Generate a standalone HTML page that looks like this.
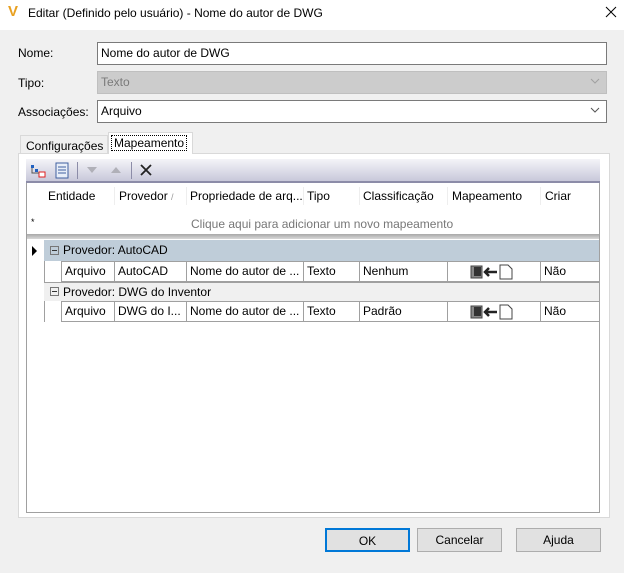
<!DOCTYPE html><html><head><style>
*{box-sizing:border-box;margin:0;padding:0}
body{width:624px;height:573px;background:#f0f0f0;font-family:"Liberation Sans",sans-serif;font-size:12px;color:#000;position:relative;overflow:hidden}
.a{position:absolute}
.inp{position:absolute;left:97px;width:510px;height:23px;border:1px solid #7a7a7a;background:#fff;padding:3px 3px;line-height:15px}
.lbl{position:absolute;left:18px}
.chev{position:absolute;right:6px;top:4px}
.c{position:absolute;white-space:nowrap;overflow:hidden;padding-left:3px;line-height:19px;border-right:1px solid #a0a0a0;height:100%;top:0}
.btn{position:absolute;top:528px;width:85px;height:24px;border:1px solid #adadad;background:#e1e1e1;text-align:center;line-height:22px}
</style></head><body>
<div class="a" style="left:0;top:0;width:624px;height:30px;background:#fff"></div>
<div class="a" style="left:8px;top:4px;width:13px;height:15px;font-weight:bold;color:#e8a020;font-size:15px;line-height:15px">V</div>
<div class="a" style="left:28px;top:6px;font-size:12px">Editar (Definido pelo usuário) - Nome do autor de DWG</div>
<svg class="a" style="left:605px;top:6px" width="12" height="12"><path d="M1 1L11 11M11 1L1 11" stroke="#000" stroke-width="1"/></svg>

<div class="lbl" style="top:46px">Nome:</div>
<div class="inp" style="top:42px">Nome do autor de DWG</div>
<div class="lbl" style="top:76px">Tipo:</div>
<div class="inp" style="top:71px;background:#cccccc;border-color:#bfbfbf;color:#7a7a7a">Texto<svg class="chev" width="10" height="10"><path d="M1 3L5 7L9 3" stroke="#a0a0a0" fill="none"/></svg></div>
<div class="lbl" style="top:105px">Associações:</div>
<div class="inp" style="top:100px">Arquivo<svg class="chev" width="10" height="10"><path d="M1 3L5 7L9 3" stroke="#555" fill="none"/></svg></div>

<div class="a" style="left:20px;top:135px;width:88px;height:19px;border:1px solid #d9d9d9;border-bottom:none;background:#f0f0f0;padding:3px 5px">Configurações</div>
<div class="a" style="left:18px;top:153px;width:592px;height:365px;border:1px solid #d9d9d9;background:#fff"></div>
<div class="a" style="left:108px;top:132px;width:85px;height:22px;border:1px solid #d9d9d9;border-bottom:none;background:#fff;padding:3px 2px"><span style="border:1px dotted #000;padding:0 2px">Mapeamento</span></div>

<div class="a" style="left:26px;top:159px;width:574px;height:24px;background:linear-gradient(#f4f4f8,#c8c8da);border-bottom:2px solid #8c8ca8"></div>
<svg class="a" style="left:30px;top:163px" width="16" height="16"><rect x="1" y="2" width="3" height="3" fill="#2060c0"/><rect x="5" y="6" width="3" height="3" fill="#2060c0"/><rect x="9" y="9" width="6" height="5" fill="#fff" stroke="#e02020"/><path d="M2 5V10H9" stroke="#555" fill="none"/></svg>
<svg class="a" style="left:55px;top:162px" width="14" height="17"><rect x="1" y="1" width="12" height="15" fill="#e8eef8" stroke="#4060a0"/><path d="M3 5H11M3 8H11M3 11H11" stroke="#4060a0"/></svg>
<div class="a" style="left:77px;top:162px;width:1px;height:17px;background:#8c8ca8"></div>
<svg class="a" style="left:85px;top:165px" width="14" height="10"><path d="M2 2H12L7 8Z" fill="#b0b0b8"/></svg>
<svg class="a" style="left:109px;top:165px" width="14" height="10"><path d="M2 8H12L7 2Z" fill="#b0b0b8"/></svg>
<div class="a" style="left:131px;top:162px;width:1px;height:17px;background:#8c8ca8"></div>
<svg class="a" style="left:139px;top:163px" width="14" height="14"><path d="M2 2L12 12M12 2L2 12" stroke="#222" stroke-width="1.8"/></svg>

<div class="a" style="left:26px;top:183px;width:574px;height:330px;border:1px solid #a0a0a0;border-top:none;background:#fff;overflow:hidden">
 <div class="a" style="left:0;top:0;width:574px;height:26px">
  <div class="a" style="left:21px;top:6px">Entidade</div>
  <div class="a" style="left:92px;top:6px">Provedor <span style="color:#999;font-size:9px">/</span></div>
  <div class="a" style="left:163px;top:6px">Propriedade de arq...</div>
  <div class="a" style="left:280px;top:6px">Tipo</div>
  <div class="a" style="left:336px;top:6px">Classificação</div>
  <div class="a" style="left:425px;top:6px">Mapeamento</div>
  <div class="a" style="left:518px;top:6px">Criar</div>
  <div class="a" style="left:87px;top:4px;width:1px;height:18px;background:#eee"></div>
  <div class="a" style="left:159px;top:4px;width:1px;height:18px;background:#eee"></div>
  <div class="a" style="left:276px;top:4px;width:1px;height:18px;background:#eee"></div>
  <div class="a" style="left:332px;top:4px;width:1px;height:18px;background:#eee"></div>
  <div class="a" style="left:420px;top:4px;width:1px;height:18px;background:#eee"></div>
  <div class="a" style="left:513px;top:4px;width:1px;height:18px;background:#eee"></div>
 </div>
 <div class="a" style="left:4px;top:34px;font-size:9px">*</div>
 <div class="a" style="left:164px;top:34px;color:#777">Clique aqui para adicionar um novo mapeamento</div>
 <div class="a" style="left:0;top:51px;width:574px;height:5px;background:linear-gradient(#a8a8a8,#d8d8d8)"></div>
 <svg class="a" style="left:5px;top:63px" width="6" height="10"><path d="M0 0L5 5L0 10Z" fill="#000"/></svg>
 <div class="a" style="left:17px;top:57px;width:557px;height:21px;background:#bfcdd9;padding-left:19px;line-height:21px">Provedor: AutoCAD</div>
 <div class="a" style="left:17px;top:99px;width:557px;height:19px;background:#f0f0f0;padding-left:19px;line-height:19px;border-top:1px solid #a0a0a0">Provedor: DWG do Inventor</div>
 <svg class="a" style="left:23px;top:63px" width="9" height="9"><rect x=".5" y=".5" width="8" height="8" fill="none" stroke="#777"/><path d="M2 4.5H7" stroke="#333"/></svg>
 <svg class="a" style="left:23px;top:104px" width="9" height="9"><rect x=".5" y=".5" width="8" height="8" fill="none" stroke="#777"/><path d="M2 4.5H7" stroke="#333"/></svg>
 <div class="a" style="left:17px;top:78px;width:557px;height:21px;border-left:1px solid #a0a0a0">
  <div class="a" style="left:0;top:0;width:17px;height:21px;background:#fff;border-right:1px solid #a0a0a0"></div>
  <div class="a" style="left:17px;top:0;width:540px;height:21px;border-top:1px solid #a0a0a0;border-bottom:1px solid #a0a0a0">
   <div class="c" style="left:0;width:53px">Arquivo</div>
   <div class="c" style="left:53px;width:72px">AutoCAD</div>
   <div class="c" style="left:125px;width:117px">Nome do autor de ...</div>
   <div class="c" style="left:242px;width:56px">Texto</div>
   <div class="c" style="left:298px;width:88px">Nenhum</div>
   <div class="c" style="left:386px;width:93px"></div>
   <div class="c" style="left:479px;width:61px;border:none">Não</div>
  </div>
 </div>
 <div class="a" style="left:17px;top:118px;width:557px;height:21px;border-left:1px solid #a0a0a0">
  <div class="a" style="left:0;top:0;width:17px;height:21px;background:#fff;border-right:1px solid #a0a0a0"></div>
  <div class="a" style="left:17px;top:0;width:540px;height:21px;border-top:1px solid #a0a0a0;border-bottom:1px solid #a0a0a0">
   <div class="c" style="left:0;width:53px">Arquivo</div>
   <div class="c" style="left:53px;width:72px">DWG do I...</div>
   <div class="c" style="left:125px;width:117px">Nome do autor de ...</div>
   <div class="c" style="left:242px;width:56px">Texto</div>
   <div class="c" style="left:298px;width:88px">Padrão</div>
   <div class="c" style="left:386px;width:93px"></div>
   <div class="c" style="left:479px;width:61px;border:none">Não</div>
  </div>
 </div>
 <svg class="a" style="left:443px;top:81px" width="50" height="16"><rect x="1" y="2" width="11" height="12" fill="#888" stroke="#444"/><rect x="4" y="3" width="7" height="9" fill="#333"/><path d="M15 8H27M19 4L15 8L19 12" stroke="#222" stroke-width="2.5" fill="none"/><path d="M30 1H38L42 5V15H30Z" fill="#fff" stroke="#444"/></svg>
 <svg class="a" style="left:443px;top:121px" width="50" height="16"><rect x="1" y="2" width="11" height="12" fill="#888" stroke="#444"/><rect x="4" y="3" width="7" height="9" fill="#333"/><path d="M15 8H27M19 4L15 8L19 12" stroke="#222" stroke-width="2.5" fill="none"/><path d="M30 1H38L42 5V15H30Z" fill="#fff" stroke="#444"/></svg>
</div>

<div class="btn" style="left:325px;border:2px solid #0078d7">OK</div>
<div class="btn" style="left:417px">Cancelar</div>
<div class="btn" style="left:516px">Ajuda</div>
</body></html>
